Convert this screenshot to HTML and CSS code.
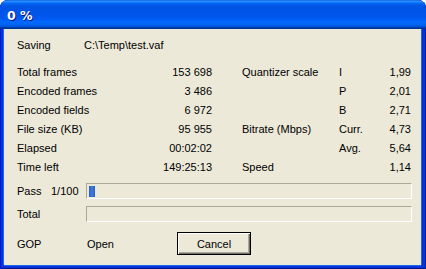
FILE: index.html
```html
<!DOCTYPE html>
<html>
<head>
<meta charset="utf-8">
<link rel="stylesheet" href="styles.css">
</head>
<body>
<div class="window">
  <div class="titlebar"><span class="title">0 %</span></div>
  <div class="client">
    <div class="saving">
      <span class="saving-label">Saving</span>
      <span>C:\Temp\test.vaf</span>
    </div>
    <div class="stats">
      <span class="c1">Total frames</span><span class="c2">153 698</span><span class="c3">Quantizer scale</span><span class="c4">I</span><span class="c5">1,99</span>
      <span class="c1">Encoded frames</span><span class="c2">3 486</span><span class="c3"></span><span class="c4">P</span><span class="c5">2,01</span>
      <span class="c1">Encoded fields</span><span class="c2">6 972</span><span class="c3"></span><span class="c4">B</span><span class="c5">2,71</span>
      <span class="c1">File size (KB)</span><span class="c2">95 955</span><span class="c3">Bitrate (Mbps)</span><span class="c4">Curr.</span><span class="c5">4,73</span>
      <span class="c1">Elapsed</span><span class="c2">00:02:02</span><span class="c3"></span><span class="c4">Avg.</span><span class="c5">5,64</span>
      <span class="c1">Time left</span><span class="c2">149:25:13</span><span class="c3">Speed</span><span class="c4"></span><span class="c5">1,14</span>
    </div>
    <div class="progress-row">
      <span class="p-label">Pass</span><span class="p-count">1/100</span>
      <div class="bar"><div class="chunk"></div></div>
    </div>
    <div class="progress-row second">
      <span class="p-label">Total</span><span class="p-count"></span>
      <div class="bar"></div>
    </div>
    <div class="footer">
      <span class="gop-label">GOP</span>
      <span class="gop-value">Open</span>
      <button class="cancel">Cancel</button>
    </div>
  </div>
</div>
</body>
</html>
```

FILE: styles.css
```css
html, body {
  margin: 0;
  padding: 0;
  background: #ffffff;
}
.window {
  width: 426px;
  height: 269px;
  box-sizing: border-box;
  background: #0831d9;
  border-radius: 8px 8px 0 0;
  display: flex;
  flex-direction: column;
  overflow: hidden;
  font-family: "Liberation Sans", Arial, sans-serif;
  font-size: 11px;
  color: #000;
  box-shadow: inset 1px 0 #0019cf, inset -1px 0 #001ea0, inset 0 -1px #00138c;
}
.titlebar {
  height: 29px;
  flex: none;
  background: linear-gradient(to bottom, #0058ee 0%, #3593ff 4%, #288eff 6%, #127dff 8%, #036ffc 10%, #0262ee 14%, #0057e5 20%, #0054e3 24%, #0055eb 56%, #005bf5 66%, #026afe 76%, #0062ef 86%, #0052d6 92%, #0040ab 94%, #003092 100%);
  border-radius: 7px 7px 0 0;
  display: flex;
  align-items: center;
  padding-left: 7px;
}
.title {
  color: #fff;
  font-family: "DejaVu Sans", sans-serif;
  font-weight: bold;
  font-size: 12.5px;
  text-shadow: 1px 1px #0f1089;
  margin-top: 1px;
}
.client {
  flex: 1;
  margin: 0 5px 4px 4px;
  background: #ece9d8;
  padding: 7px 9px 0 13px;
  display: flex;
  flex-direction: column;
  box-shadow: -1px 0 #166aee, 1px 0 #166aee, 0 1px #166aee;
}
.saving {
  height: 19px;
  line-height: 19px;
  display: flex;
}
.saving-label {
  width: 67px;
}
.stats {
  margin-top: 8px;
  display: grid;
  grid-template-columns: 133px 62px 126px 32px 41px;
  grid-auto-rows: 19px;
  line-height: 19px;
}
.c2, .c5 {
  text-align: right;
  white-space: nowrap;
}
.c3 {
  padding-left: 30px;
  white-space: nowrap;
}
.c4 {
  padding-left: 1px;
}
.progress-row {
  margin-top: 6px;
  height: 16px;
  display: flex;
  align-items: center;
}
.progress-row.second {
  margin-top: 7px;
}
.p-label {
  width: 34px;
}
.p-count {
  width: 35px;
}
.bar {
  flex: 1;
  height: 16px;
  box-sizing: border-box;
  border-top: 1px solid #aca899;
  border-left: 1px solid #aca899;
  border-bottom: 1px solid #fff;
  border-right: 1px solid #fff;
  padding: 1px 1px;
}
.chunk {
  width: 6px;
  height: 11px;
  margin: 1px 0 0 1px;
  background: linear-gradient(to right, #2a5fc4, #3f7be0 50%, #2a5fc4);
}
.footer {
  margin-top: 10px;
  height: 23px;
  display: flex;
  align-items: center;
}
.gop-label {
  width: 70px;
}
.gop-value {
  width: 90px;
}
.cancel {
  width: 74px;
  height: 23px;
  box-sizing: border-box;
  font-family: "Liberation Sans", Arial, sans-serif;
  font-size: 11px;
  color: #000;
  background: #ece9d8;
  border: 1px solid #000;
  box-shadow: inset 1px 1px #fff, inset -1px -1px #716f64, inset -2px -2px #aca899;
  padding: 0;
  margin: 0;
}
```
